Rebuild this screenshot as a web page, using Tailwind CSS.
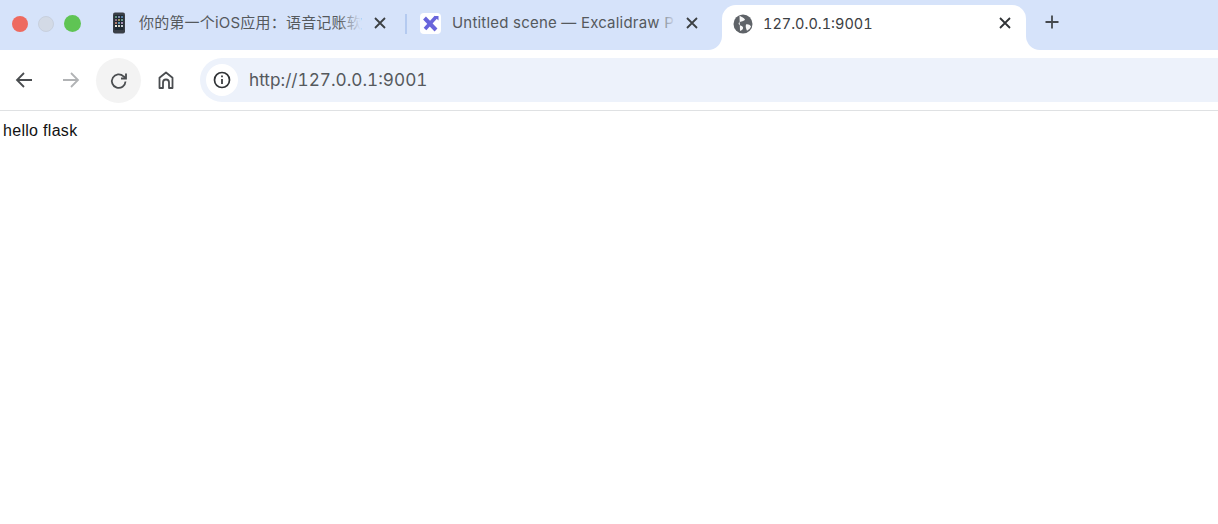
<!DOCTYPE html>
<html lang="zh">
<head>
<meta charset="utf-8">
<title>127.0.0.1:9001</title>
<script src="https://cdn.jsdelivr.net/npm/@tailwindcss/browser@4"></script>
</head>
<body class="w-[1218px] h-[524px] overflow-hidden bg-white font-['Inter','Noto_Sans_CJK_SC',sans-serif]">
  <!-- tab strip -->
  <div class="h-[50px] bg-[#d6e3fa] flex items-start relative">
    <div class="flex items-center gap-[10px] pl-[12px] pt-[15px] w-[106px] shrink-0">
      <span class="size-4 rounded-full bg-[#ee6a5f]"></span>
      <span class="size-4 rounded-full bg-[#d3dae6] border border-[#c8d0de]"></span>
      <span class="size-[17px] rounded-full bg-[#5fc454]"></span>
    </div>
    <!-- tab 1 -->
    <div class="w-[299px] h-[46px] shrink-0 flex items-center text-[#55595d] text-[15px] tracking-[0.2px] tabular-nums">
      <svg class="w-[20px] h-[22px] ml-[3px] shrink-0" viewBox="0 0 20 22">
        <rect x="4" y="0.500" width="12" height="21" rx="2" fill="#3a3f46"/>
        <rect x="5.500" y="3" width="9" height="15" fill="#1f2a33"/>
        <rect x="6" y="4" width="2" height="2" fill="#5f8f7d"/><rect x="9" y="4" width="2" height="2" fill="#7d87a8"/><rect x="12" y="4" width="2" height="2" fill="#4f7aa3"/>
        <rect x="6" y="7" width="2" height="2" fill="#8a6f86"/><rect x="9" y="7" width="2" height="2" fill="#9c8f5a"/><rect x="12" y="7" width="2" height="2" fill="#6c9a8c"/>
        <rect x="6" y="10" width="2" height="2" fill="#b07a6a"/><rect x="9" y="10" width="2" height="2" fill="#5c8fb0"/><rect x="12" y="10" width="2" height="2" fill="#a68fb3"/>
        <rect x="6" y="13" width="2" height="2" fill="#e6e6da"/><rect x="9" y="13" width="2" height="2" fill="#d6d2c0"/><rect x="12" y="13" width="2" height="2" fill="#c2ccd0"/>
      </svg>
      <div class="relative w-[220px] ml-[10px] pt-[1px] whitespace-nowrap shrink-0">你的第一个iOS应用：语音记账软
        <span class="absolute -right-[2px] top-0 bottom-0 w-[22px] bg-gradient-to-r from-[#d6e3fa00] to-[#d6e3fa]"></span>
      </div>
      <svg class="size-4 ml-[13px] shrink-0" viewBox="0 0 16 16" fill="none" stroke="#3c4043" stroke-width="1.800"><path d="M3 3l10 10M13 3L3 13"/></svg>
    </div>
    <div class="w-[2px] h-[20px] bg-[#b4caf0] mt-[14px] shrink-0"></div>
    <!-- tab 2 -->
    <div class="w-[315px] h-[46px] shrink-0 flex items-center text-[#55595d] text-[15px] tracking-[0.2px]">
      <svg class="size-[21px] ml-[13px] shrink-0" viewBox="0 0 21 21" fill="none">
        <rect width="21" height="21" rx="4" fill="#fff"/>
        <path d="M4.500 5l11.500 12" stroke="#6965db" stroke-width="4"/>
        <path d="M16 4L5 16" stroke="#6965db" stroke-width="3.600"/>
        <path d="M14 3h4.500v4.500z" fill="#6965db"/>
      </svg>
      <div class="relative w-[218px] ml-[11px] pt-[1px] whitespace-nowrap shrink-0">Untitled scene — Excalidraw P
        <span class="absolute -right-[6px] top-0 bottom-0 w-[20px] bg-gradient-to-r from-[#d6e3fa00] to-[#d6e3fa]"></span>
      </div>
      <svg class="size-4 ml-[14px] shrink-0" viewBox="0 0 16 16" fill="none" stroke="#3c4043" stroke-width="1.800"><path d="M3 3l10 10M13 3L3 13"/></svg>
    </div>
    <!-- active tab -->
    <div class="relative w-[304px] h-[45px] mt-[5px] shrink-0 bg-white rounded-t-[14px] flex items-start pt-[9px] text-[#3c4043] text-[14.5px] tabular-nums">
      <span class="absolute -left-[14px] bottom-0 size-[14px] bg-white"><span class="block size-full bg-[#d6e3fa] rounded-br-[14px]"></span></span>
      <span class="absolute -right-[14px] bottom-0 size-[14px] bg-white"><span class="block size-full bg-[#d6e3fa] rounded-bl-[14px]"></span></span>
      <svg class="size-[20px] ml-[11px] shrink-0" viewBox="0 0 20 20">
        <circle cx="10" cy="10" r="9.500" fill="#5f6368"/>
        <path d="M6.500 1.500C8 3 11 3.500 12 5.500c-1 2-4 1.500-6 3-1 1 0 2.500 1.500 3 2 .5 3 1.500 2.500 3-.3 1-1.500 2-3 2.500M13 10.500c2-.5 4 .5 5 2-.8 1.800-2 3.200-4 4.200-.8-2-1.800-4-1-6.200z" fill="#fff" fill-opacity="0.95"/>
      </svg>
      <span class="ml-[10px] leading-[20px] whitespace-nowrap">127.0.0.1:9001</span>
      <svg class="size-4 ml-auto mr-[13px] mt-[1px] shrink-0" viewBox="0 0 16 16" fill="none" stroke="#303336" stroke-width="1.800"><path d="M3 3l10 10M13 3L3 13"/></svg>
    </div>
    <svg class="size-[18px] ml-[17px] mt-[13px] shrink-0" viewBox="0 0 18 18" fill="none" stroke="#45494d" stroke-width="1.800"><path d="M9 2.500v13M2.500 9h13"/></svg>
  </div>
  <!-- toolbar -->
  <div class="h-[61px] bg-white border-b border-[#dfe1e3] rounded-tl-[6px] flex items-start pt-[8px]">
    <button class="size-[44px] ml-[2px] flex items-center justify-center shrink-0">
      <svg class="size-[20px]" viewBox="0 0 20 20" fill="none" stroke="#4a4d50" stroke-width="1.800"><path d="M18 10H3.500M10 3l-7 7 7 7"/></svg>
    </button>
    <button class="size-[44px] ml-[3px] flex items-center justify-center shrink-0">
      <svg class="size-[20px]" viewBox="0 0 20 20" fill="none" stroke="#b1b3b5" stroke-width="1.800"><path d="M2 10h14.500M10 3l7 7-7 7"/></svg>
    </button>
    <button class="size-[45px] ml-[3px] rounded-full bg-[#f3f3f3] flex items-center justify-center shrink-0">
      <svg class="size-[20px]" viewBox="0 0 20 20" fill="none" stroke="#4a4d50" stroke-width="1.800"><path d="M16.500 10.500a6.800 6.800 0 1 1-2-5.200L16.500 7"/><path d="M17 2.500V7.500H12" /></svg>
    </button>
    <button class="size-[44px] ml-[3px] flex items-center justify-center shrink-0">
      <svg class="size-[20px]" viewBox="0 0 20 20" fill="none" stroke="#4a4d50" stroke-width="1.800"><path d="M3.500 18V7.800L10 2.500l6.500 5.300V18H13v-5.500a3 3 0 0 0-6 0V18z" stroke-linejoin="round"/></svg>
    </button>
    <!-- omnibox -->
    <div class="flex-1 h-[44px] ml-[12px] bg-[#edf2fb] rounded-l-[22px] flex items-center">
      <span class="size-[32px] ml-[6px] rounded-full bg-white flex items-center justify-center shrink-0">
        <svg class="size-[18px]" viewBox="0 0 18 18" fill="none" stroke="#303336" stroke-width="1.700"><circle cx="9" cy="9" r="7.500"/><path d="M9 8v5M9 4.500v1.800"/></svg>
      </span>
      <span class="ml-[11px] text-[17.2px] tabular-nums text-[#55595d] whitespace-nowrap">http://127.0.0.1:9001</span>
    </div>
  </div>
  <!-- page -->
  <div class="pl-[3px] pt-[10px] text-[16px] leading-[20px] tracking-[0.3px] text-[#111] font-['Liberation_Sans',sans-serif]">hello flask</div>
</body>
</html>
